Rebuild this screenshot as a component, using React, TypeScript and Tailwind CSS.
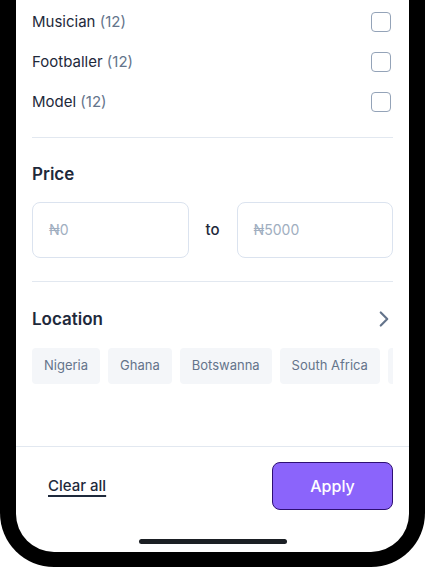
import React from 'react'
import { ChevronRight } from 'lucide-react'

const categories = [
  { label: 'Musician', count: 12 },
  { label: 'Footballer', count: 12 },
  { label: 'Model', count: 12 }
]

const locations = ['Nigeria', 'Ghana', 'Botswanna', 'South Africa', 'Kenya']

const App: React.FC = () => {
  return (
    <div
      className="w-[425px] h-[568px] bg-white overflow-hidden"
      style={{ fontFamily: 'Inter, "Noto Sans", sans-serif' }}
    >
      {/* Phone frame */}
      <div className="h-[567px] bg-black px-4 pb-[15px] rounded-b-[54px]">
        <div className="h-[552px] bg-white rounded-b-[38px] flex flex-col overflow-hidden">
          {/* Scrollable filters */}
          <div className="flex-1 px-4 pt-[2px] overflow-hidden">
            {categories.map((c) => (
              <div key={c.label} className="h-10 flex items-center justify-between">
                <span className="text-[15px] text-[#1e293b]">
                  {c.label} <span className="text-[#64748b]">({c.count})</span>
                </span>
                <span className="w-5 h-5 mr-[2px] rounded-[4px] border-[1.5px] border-[#94a3b8]" />
              </div>
            ))}

            <div className="mt-[15px] h-px bg-[#e2e8f0]" />

            {/* Price */}
            <h3 className="mt-6 text-[17px] leading-6 font-semibold text-[#1e293b]">Price</h3>
            <div className="mt-4 flex items-center gap-3">
              <div className="flex-1 h-14 rounded-lg border border-[#dbe3ef] flex items-center px-4 text-sm text-[#a0aec0]">
                ₦0
              </div>
              <span className="w-[24px] text-center text-[15px] font-medium text-[#1e293b]">to</span>
              <div className="flex-1 h-14 rounded-lg border border-[#dbe3ef] flex items-center px-4 text-sm text-[#a0aec0]">
                ₦5000
              </div>
            </div>

            <div className="mt-[23px] h-px bg-[#e2e8f0]" />

            {/* Location */}
            <div className="mt-6 flex items-center justify-between">
              <h3 className="text-[17px] leading-6 font-semibold text-[#1e293b]">Location</h3>
              <ChevronRight size={26} strokeWidth={2} className="text-[#64748b] -mr-1" />
            </div>
            <div className="mt-4 flex gap-2 overflow-hidden">
              {locations.map((l) => (
                <span
                  key={l}
                  className="shrink-0 h-9 px-3 rounded bg-[#f4f6f9] flex items-center text-[13px] text-[#64748b] whitespace-nowrap"
                >
                  {l}
                </span>
              ))}
            </div>
          </div>

          {/* Footer */}
          <div className="border-t border-[#e2e8f0] px-4 pt-[15px] pb-2">
            <div className="flex items-center justify-between">
              <button className="ml-4 text-[15px] font-medium text-[#1e293b] underline underline-offset-4 decoration-[1.5px]">
                Clear all
              </button>
              <button className="w-[121px] h-12 rounded-lg bg-[#8b64fb] border border-[#2e0f73] text-white text-base font-medium">
                Apply
              </button>
            </div>
            <div className="mt-[29px] mx-auto w-[148px] h-[5px] rounded-full bg-[#1b1f24]" />
          </div>
        </div>
      </div>
    </div>
  )
}

export default App
